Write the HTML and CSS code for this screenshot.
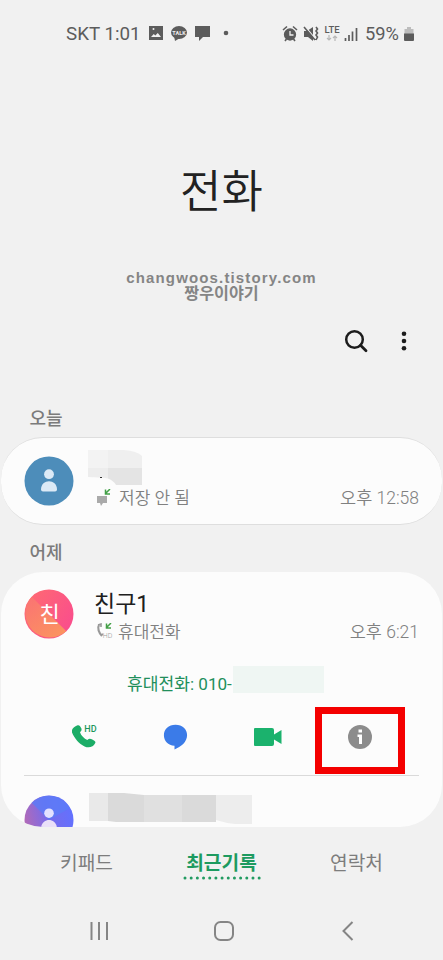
FILE: index.html
```html
<!DOCTYPE html>
<html lang="ko">
<head>
<meta charset="utf-8">
<meta name="viewport" content="width=device-width, initial-scale=1">
<title>전화</title>
<link rel="stylesheet" href="styles.css">
</head>
<body>
<div class="phone">
  <header class="status">
    <span class="carrier">SKT 1:01</span>
    <svg class="status-left" width="84" height="20" viewBox="0 0 84 20">
      <path fill="#5c5c5c" fill-rule="evenodd" d="M1 3h14v14H1zM3 14h10l-3.200-4-2.500 2.500-1.500-1.500zM4.500 6a1 1 0 1 0 2 0a1 1 0 1 0-2 0"/>
      <ellipse cx="31" cy="9.500" rx="8" ry="6.500" fill="#5c5c5c"/>
      <path fill="#5c5c5c" d="M26 13l1 5 5-3z"/>
      <text x="31" y="11.700" class="talk">TALK</text>
      <path fill="#5c5c5c" d="M47 3h15v11h-7l-4 4v-4h-4z"/>
      <circle cx="78" cy="10" r="2.300" fill="#5c5c5c"/>
    </svg>
    <svg class="status-right" width="78" height="20" viewBox="0 0 78 20">
      <g fill="none" stroke="#5c5c5c">
        <circle cx="8" cy="10.500" r="5.400" fill="#5c5c5c" stroke-width="1.500"/>
        <path d="M1 6l4-3.500M15 6l-4-3.500M4.500 15L3 17M11.500 15l1.500 2" stroke-width="1.600"/>
        <path d="M8 7v4h3.500" stroke="#f1f1f1" stroke-width="1.300"/>
      </g>
      <path fill="#5c5c5c" d="M22 7h3l6-4v14l-5-4h-4z"/>
      <path d="M23.500 3l10 12" stroke="#f1f1f1" stroke-width="1.200"/>
      <path d="M22 3l11 13M34 3l1.500 2-1.500 2 1.500 2-1.500 2 1.500 2-1.500 3" fill="none" stroke="#5c5c5c" stroke-width="1.600"/>
      <text x="50" y="9" class="lte">LTE</text>
      <path d="M47 11v5M45 14l2 2 2-2M53 17v-5M51 14l2-2 2 2" fill="none" stroke="#b8b8b8" stroke-width="1.200"/>
      <path d="M63.500 17v-3M67 17V11M70.500 17V7.500M74.500 17V4" stroke="#5c5c5c" stroke-width="1.700"/>
    </svg>
    <span class="percent">59%</span>
    <svg class="battery" width="12" height="18" viewBox="0 0 12 18">
      <path fill="#bdbdbd" d="M4 1h4v2h2.500v5h-9V3H4z"/>
      <path fill="#5c5c5c" d="M1 7.500h10V14q0 1-1 1H2q-1 0-1-1z"/>
    </svg>
  </header>

  <h1 class="title">전화</h1>
  <div class="mark"><div class="mark-url">changwoos.tistory.com</div><div class="mark-name">짱우이야기</div></div>

  <div class="toolbar">
    <svg width="24" height="24" viewBox="0 0 24 24" fill="none" stroke="#1c1c1c"><circle cx="10.500" cy="10.500" r="8.300" stroke-width="2.500"/><path d="M16.500 16.300l5.500 5.500" stroke-width="2.800" stroke-linecap="round"/></svg>
    <svg width="6" height="22" viewBox="0 0 6 22" fill="#1c1c1c"><circle cx="3" cy="3.700" r="2.300"/><circle cx="3" cy="11" r="2.300"/><circle cx="3" cy="18.300" r="2.300"/></svg>
  </div>

  <h2 class="day today">오늘</h2>
  <section class="card single">
    <svg class="avatar" width="50" height="50" viewBox="0 0 50 50">
      <circle cx="25" cy="25" r="24.500" fill="#4d8dba"/>
      <circle cx="25" cy="18.200" r="4.900" fill="#dceaf6"/>
      <path fill="#dceaf6" d="M17 33.500c0-11 16-11 16 0q0 2-2 2H19q-2 0-2-2z"/>
    </svg>
    <div class="entry">
      <svg class="redacted" width="56" height="38" viewBox="0 0 56 38">
        <path fill="#f3f3f3" d="M0 1h20v27H0z"/>
        <path fill="#efefef" d="M20 1h16q13 1 18 6v12H20z"/>
        <path fill="#ededed" d="M0 19h20v10.500Q12 28 0 28z"/>
        <path fill="#e4e4e4" d="M20 19h34v17H28q-2-4-8-6.500z"/>
        <path fill="#333" d="M12 28h2v1h-2z"/>
      </svg>
      <div class="detail">
        <svg width="17" height="18" viewBox="0 0 17 18"><path fill="#aaa" d="M1 7h10v7H7l-2 3-1-3H1z"/><path d="M14 0L9 5M9.500 .5V5H14" fill="none" stroke="#43a047" stroke-width="1.500"/></svg>
        <span>저장 안 됨</span>
      </div>
    </div>
    <time class="time">오후 12:58</time>
  </section>

  <h2 class="day yesterday">어제</h2>
  <section class="card group">
    <div class="row">
      <svg class="avatar" width="50" height="50" viewBox="0 0 50 50">
        <defs><linearGradient id="pink" x1="0" y1="0" x2="1" y2=".6"><stop offset="0" stop-color="#ff6c70"/><stop offset="1" stop-color="#fa4f8b"/></linearGradient><linearGradient id="coral" x1="0" y1="0" x2=".7" y2="1"><stop offset="0" stop-color="#fa7274"/><stop offset="1" stop-color="#fb9260"/></linearGradient></defs>
        <circle cx="25" cy="25" r="24.500" fill="url(#pink)"/>
        <path fill="url(#coral)" d="M7.700 7.700A24.500 24.500 0 0 0 42.300 42.300z"/>
        <text x="25.500" y="33" class="initial">친</text>
      </svg>
      <div class="entry">
        <div class="name">친구1</div>
        <div class="detail">
          <svg width="17" height="18" viewBox="0 0 17 18"><path d="M3 2C1 5 3 10 6 13" fill="none" stroke="#999" stroke-width="2.200"/><path d="M2 2l3-1v3M5 12l2-1" stroke="#999" stroke-width="1.600" fill="none"/><path d="M15 0L10 5M10.500 .5V5H15" fill="none" stroke="#43a047" stroke-width="1.500"/><text x="11.500" y="14.500" class="hd-small">HD</text></svg>
          <span>휴대전화</span>
        </div>
      </div>
      <time class="time">오후 6:21</time>
    </div>
    <div class="number"><span>휴대전화: 010-</span><i class="number-block"></i></div>
    <div class="actions">
      <div class="action"><svg width="28" height="28" viewBox="0 0 28 28">
        <path fill="#1cad67" d="M5 2.500c2-1 3 .2 4.200 2.600.8 1.800.2 2.800-1.200 4.200 1 3.300 4.200 6.300 7.300 7.800 1.500-1.600 3-1.800 4.500-.8 2.300 1.200 4.500 2.300 3.300 4-1.600 3.500-6 5.200-10.500 3.200C7 20.700 2.500 15.500 0 9.500-1 6 2.500 3.500 5 2.500z"/>
        <text x="18.500" y="9" class="hd">HD</text></svg></div>
      <div class="action"><svg width="26" height="26" viewBox="0 0 26 26"><path fill="#3b7be8" d="M12.500 .8c7 0 11.600 4.500 11.600 10.300 0 7-6.100 11.900-12.600 14.400v-3.800C5 21.500.9 17 .9 11.200.9 5.200 5.500.8 12.500.8z"/></svg></div>
      <div class="action"><svg width="30" height="20" viewBox="0 0 30 20"><path fill="#1bb26d" d="M1 1h17q2 0 2 2v4.500L27.500 3v14L20 12.500V17q0 2-2 2H1q-1 0-1-1V2q0-1 1-1z"/></svg></div>
      <div class="action info"><svg width="26" height="26" viewBox="0 0 26 26"><circle cx="13" cy="13" r="12" fill="#8c8c8c"/><path fill="#fff" d="M11.500 5.500h3.500v3h-3.500zM10.500 10.500H15V20h-3v-7h-1.500z"/></svg></div>
    </div>
    <div class="row last">
      <svg class="avatar" width="50" height="50" viewBox="0 0 50 50">
        <defs><linearGradient id="blue" x1="0" y1=".7" x2="1" y2=".45"><stop offset="0" stop-color="#b76ab3"/><stop offset=".5" stop-color="#776bea"/><stop offset="1" stop-color="#6271ff"/></linearGradient></defs>
        <circle cx="25" cy="25" r="24.500" fill="url(#blue)"/>
        <path fill="#5b7cf7" d="M7.700 7.700A24.500 24.500 0 0 1 46 13L25 25z" opacity=".8"/>
        <circle cx="25" cy="18.200" r="4.800" fill="#e3e2ff"/><path fill="#e9dff8" d="M17 34c0-12 16-12 16 0z"/>
      </svg>
      <svg class="redacted-long" width="164" height="34" viewBox="0 0 164 34">
        <path fill="#e9e9e9" d="M0 0h19v28H0z"/><path fill="#dadada" d="M19 0h16l20 2v27H27l-8-1z"/><path fill="#e0e0e0" d="M55 2h38v27H55z"/><path fill="#dadada" d="M93 2h34v27H93z"/><path fill="#ededed" d="M127 2h36v29h-17q-10-1-19-4z"/>
      </svg>
    </div>
  </section>

  <nav class="tabs"><span class="tab">키패드</span><span class="tab active">최근기록<svg width="78" height="4" viewBox="0 0 78 4"><path d="M2 2H77" stroke="#229b61" stroke-width="3" stroke-linecap="round" stroke-dasharray="0 6.180"/></svg></span><span class="tab">연락처</span></nav>
  <footer class="keys">
    <svg width="20" height="20" viewBox="0 0 20 20"><path d="M2.500 1v18M10 1v18M18 1v18" stroke="#858585" stroke-width="2"/></svg>
    <svg class="home" width="20" height="20" viewBox="0 0 20 20"><rect x="1" y="1" width="18" height="18" rx="5.500" fill="none" stroke="#858585" stroke-width="2"/></svg>
    <svg width="12" height="20" viewBox="0 0 12 20"><path d="M10.500 1L1.500 10l9 9" fill="none" stroke="#858585" stroke-width="2"/></svg>
  </footer>
</div>
</body>
</html>
```
FILE: styles.css
```css
* { box-sizing: border-box; }
body { margin: 0; background: #f1f1f1; font-family: Roboto, "Noto Sans CJK KR", sans-serif; color: #7d7d7d; }
svg { display: block; flex: none; }
.phone { width: 443px; height: 960px; display: flex; flex-direction: column; overflow: hidden; }
.status { height: 68px; display: flex; align-items: center; padding: 0 28px 0 66px; color: #5c5c5c; font-size: 18.8px; line-height: 24px; }
.carrier { width: 82px; white-space: nowrap; }
.status-left { margin-top: -2px; }
.status-right { margin-left: 50px; }
.percent { width: 36px; margin-left: 5px; font-size: 18.3px; }
.battery { margin: 2px 0 0 2px; }
.talk { font-size: 5.5px; font-weight: 700; fill: #eee; text-anchor: middle; }
.lte { font-size: 9.5px; font-weight: 500; fill: #5c5c5c; text-anchor: middle; }
.title { margin: 93px 0 0; height: 64px; line-height: 64px; text-align: center; font-size: 45px; font-weight: 350; color: #222; }
.mark { margin-top: 45px; text-align: center; font-weight: 700; line-height: 15px; color: #858585; }
.mark-url { font-family: "Liberation Sans", sans-serif; font-size: 15px; line-height: 16px; letter-spacing: 1.15px; }
.mark-name { font-size: 16.2px; line-height: 16px; }
.toolbar { height: 24px; margin-top: 27px; padding: 0 36px; display: flex; justify-content: flex-end; align-items: center; gap: 33px; }
.day { margin: 0; font-size: 18px; font-weight: 500; line-height: 26px; padding-left: 29.5px; color: #7b7b7b; }
.today { margin-top: 53px; }
.yesterday { margin-top: 15px; }
.card { margin: 0 1px; background: #fcfcfc; border-radius: 42px; }
.single { height: 88px; margin-top: 5px; display: flex; border: solid #dedede; border-width: 1px 0; padding: 0 23px; }
.single .avatar { margin-top: 17.5px; }
.entry { margin-left: 14px; flex: 1; }
.redacted { margin-top: 11px; }
.detail { display: flex; align-items: center; gap: 6px; padding-left: 8px; font-size: 17px; line-height: 24px; font-weight: 350; color: #808080; }
.single .detail { margin-top: -1px; }
.single .time { margin-top: 48px; }
.time { font-size: 17.5px; font-weight: 350; line-height: 24px; white-space: nowrap; color: #808080; }
.group { height: 255px; margin-top: 6px; border-radius: 42px; overflow: hidden; }
.row { display: flex; height: 96px; padding: 0 23px; }
.row .avatar { margin-top: 17px; }
.row .entry { margin-left: 20px; }
.row .detail { padding-left: 2px; gap: 5px; }
.row .time { margin-top: 48px; }
.name { margin-top: 17px; height: 31px; font-size: 23px; font-weight: 400; line-height: 31px; color: #202020; }
.initial { font-size: 22px; fill: #fff; text-anchor: middle; }
.hd-small { font-size: 7px; fill: #999; text-anchor: middle; }
.number { display: flex; align-items: center; height: 28px; margin: 0 0 12px 126px; font-size: 17.1px; color: #218f5b; white-space: nowrap; }
.number-block { width: 91px; height: 27px; margin: -6px 0 0 1px; background: #eff6f3; }
.actions { margin: 0 23px; height: 68px; border-bottom: 1px solid #dadada; display: grid; grid-template-columns: 120px 64px 121px 1fr; }
.action { display: flex; justify-content: center; align-items: center; height: 58px; }
.action:first-child { padding-left: 4px; }
.info { width: 90px; height: 67px; border: 7px solid #f40000; padding-bottom: 8px; margin: -1px 0 0 -14px; }
.hd { font-size: 9px; font-weight: 500; fill: #1b975b; text-anchor: middle; }
.last { height: 80px; }
.last .avatar { margin-top: 19px; }
.last .redacted-long { margin: 17px 0 0 15px; }
.tabs { display: flex; height: 60px; margin-top: 19px; padding-left: 1.5px; font-size: 19.2px; line-height: 35px; }
.tab { width: 170px; text-align: center; }
.tab.active { width: 100px; font-weight: 700; color: #1d9b60; }
.active svg { margin: -5px auto 0; }
.keys { display: flex; justify-content: space-between; align-items: center; height: 50px; padding: 0 89px; }
.home { margin-right: 4px; }
```
